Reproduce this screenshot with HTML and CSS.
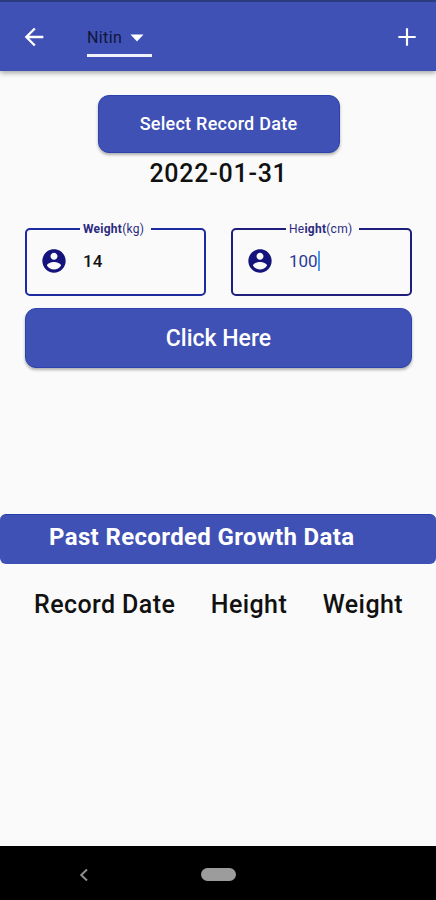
FILE: index.html
```html
<!DOCTYPE html>
<html lang="en">
<head>
    <meta charset="UTF-8">
    <meta name="viewport" content="width=device-width, initial-scale=1.0">
    <title>Growth Record</title>
    <link rel="stylesheet" href="styles.css">
</head>
<body>

    <header class="app-bar">
        <svg class="back" width="28" height="28" viewBox="0 0 24 24"><path d="M20 11H7.83l5.59-5.59L12 4l-8 8 8 8 1.41-1.41L7.83 13H20v-2z"/></svg>
        <div class="child-select">
            <span class="child-name">Nitin</span>
            <svg width="14" height="8" viewBox="0 0 14 8"><path d="M0.5 0.5h13L7 7.5z"/></svg>
        </div>
        <svg class="add" width="26" height="26" viewBox="0 0 24 24"><path d="M20 13h-7v7h-2v-7H4v-2h7V4h2v7h7v2z"/></svg>
    </header>

    <main class="content">
        <button class="btn date-btn"><span>Select Record Date</span></button>
        <p class="record-date"><span>2022-01-31</span></p>

        <div class="fields">
            <fieldset class="field">
                <legend><b>Weight</b>(kg)</legend>
                <svg width="28" height="28" viewBox="0 0 24 24"><path d="M12 2C6.48 2 2 6.48 2 12s4.48 10 10 10 10-4.48 10-10S17.52 2 12 2zm0 3c1.66 0 3 1.34 3 3s-1.34 3-3 3-3-1.34-3-3 1.34-3 3-3zm0 14.2c-2.5 0-4.71-1.28-6-3.22.03-1.99 4-3.08 6-3.08 1.99 0 5.97 1.09 6 3.08-1.29 1.94-3.5 3.22-6 3.22z"/></svg>
                <span class="value">14</span>
            </fieldset>
            <fieldset class="field height-field">
                <legend>He<b>ight</b>(cm)</legend>
                <svg width="28" height="28" viewBox="0 0 24 24"><path d="M12 2C6.48 2 2 6.48 2 12s4.48 10 10 10 10-4.48 10-10S17.52 2 12 2zm0 3c1.66 0 3 1.34 3 3s-1.34 3-3 3-3-1.34-3-3 1.34-3 3-3zm0 14.2c-2.5 0-4.71-1.28-6-3.22.03-1.99 4-3.08 6-3.08 1.99 0 5.97 1.09 6 3.08-1.29 1.94-3.5 3.22-6 3.22z"/></svg>
                <span class="value">100</span>
                <span class="cursor"></span>
            </fieldset>
        </div>

        <button class="btn submit-btn"><span>Click Here</span></button>
    </main>

    <section class="history">
        <h2 class="history-title">Past Recorded Growth Data</h2>
        <div class="history-header">
            <span>Record Date</span>
            <span>Height</span>
            <span>Weight</span>
        </div>
    </section>

    <!-- Android navigation bar -->
    <nav class="nav-bar">
        <svg class="nav-back" width="10" height="14" viewBox="0 0 10 14"><path d="M8 1.5L2.2 7 8 12.5"/></svg>
        <div class="nav-home"></div>
    </nav>

</body>
</html>
```
FILE: styles.css
```css
* {
    box-sizing: border-box;
}

body {
    margin: 0;
    height: 900px;
    display: flex;
    flex-direction: column;
    font-family: Roboto, "Liberation Sans", sans-serif;
    background-color: #fafafa;
    color: #111;
    overflow: hidden;
}

/* App bar */
.app-bar {
    height: 71px;
    padding: 1px 16px 0 20px;
    display: flex;
    align-items: center;
    background-color: #3f51b5;
    border-top: 2px solid #2c3a80;
    box-shadow: 0 2px 5px rgba(0, 0, 0, 0.35);
}
.app-bar svg {
    fill: white;
}
.child-select {
    width: 65px;
    height: 31px;
    margin: 8px auto 0 39px;
    padding-bottom: 4px;
    display: flex;
    align-items: center;
    gap: 8px;
    border-bottom: 3px solid #f0f3ff;
}
.child-name {
    font-size: 16px;
    letter-spacing: 0.4px;
    color: #10153a;
}

/* Record form */
.content {
    padding: 24px 24px 0 25px;
    display: flex;
    flex-direction: column;
    align-items: center;
}
.btn {
    border: 1px solid #2c42ac;
    background-color: #3f51b5;
    color: white;
    font-family: inherit;
    font-weight: 500;
    box-shadow: 0 2px 3px rgba(0, 0, 0, 0.3);
}
.date-btn {
    width: 242px;
    height: 58px;
    padding-bottom: 3px;
    border-radius: 11px;
    font-size: 18px;
    letter-spacing: 0.25px;
}
.record-date {
    margin: 6px 0 0;
    font-size: 25px;
    line-height: 30px;
    font-weight: 500;
    letter-spacing: 0.75px;
}
.fields {
    width: 100%;
    margin-top: 33px;
    display: flex;
    justify-content: space-between;
}
.field {
    width: 181px;
    height: 74px;
    margin: 0;
    padding: 0 0 8px 13px;
    display: flex;
    align-items: center;
    border: 2px solid #1c2ba0;
    border-radius: 5px;
}
.field legend {
    margin-left: 40px;
    padding: 0 7px 0 3px;
    font-size: 12px;
    line-height: 14px;
    letter-spacing: 0.25px;
    color: #2a2a80;
}
.field svg {
    fill: #14147c;
}
.value {
    margin-left: 15px;
    font-size: 17px;
    font-weight: 500;
}
.height-field {
    border-color: #1e1e7c;
}
.height-field .value {
    color: #2b3a96;
    font-weight: 400;
}
.cursor {
    width: 2px;
    height: 20px;
    background-color: #4f98ea;
}
.submit-btn {
    width: 387px;
    height: 60px;
    margin-top: 12px;
    border-radius: 11px;
    font-size: 23px;
}

/* Past records */
.history {
    flex: 1;
    margin-top: 146px;
}
.history-title {
    height: 50px;
    margin: 0;
    padding-left: 49px;
    border-top: 1px solid #2340a8;
    border-radius: 6px;
    background-color: #3f51b5;
    color: white;
    font-size: 24px;
    line-height: 44px;
    font-weight: 700;
    letter-spacing: 0.36px;
}
.history-header {
    margin-top: 25px;
    padding: 0 33px 0 34px;
    display: flex;
    justify-content: space-between;
    font-size: 25px;
    line-height: 31px;
    font-weight: 500;
    letter-spacing: 0.4px;
}

.nav-bar {
    height: 54px;
    padding: 3px 0 0 79px;
    display: flex;
    align-items: center;
    background-color: black;
}
.nav-back {
    fill: none;
    stroke: #8e8e8e;
    stroke-width: 2;
}
.nav-home {
    width: 35px;
    height: 13px;
    margin-left: 112px;
    border-radius: 7px;
    background-color: #9c9c9c;
}
```
